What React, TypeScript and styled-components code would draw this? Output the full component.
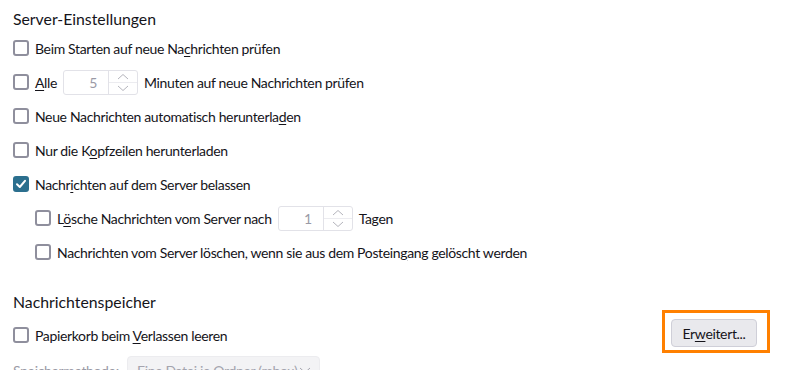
import React from "react";
import styled, { createGlobalStyle } from "styled-components";

const GlobalStyle = createGlobalStyle`
    html, body {
        margin: 0;
        padding: 0;
        background: #ffffff;
    }
    body {
        font-family: Lato, "Noto Sans", sans-serif;
        color: #15141a;
    }
`

const Page = styled.div`
    width: 799px;
    height: 370px;
    overflow: hidden;
    box-sizing: border-box;
    padding: 7px 29px 0 13px;
    display: flex;
    flex-direction: column;
    & > * {
        flex-shrink: 0;
    }
`

const Heading = styled.h2<{ $top?: number }>`
    margin: ${p => p.$top ?? 0}px 0 0 0;
    font-size: 15.8px;
    font-weight: 400;
    line-height: 24px;
    height: 24px;
`

const Row = styled.div<{ $indent?: boolean, $height?: number }>`
    display: flex;
    align-items: center;
    height: ${p => p.$height ?? 34}px;
    padding-left: ${p => p.$indent ? 22 : 0}px;
    font-size: 14px;
    letter-spacing: -0.35px;
    gap: 6px;
    white-space: nowrap;
`

const SpreadRow = styled(Row)`
    justify-content: space-between;
    align-items: flex-start;
`

const LeftGroup = styled.div`
    display: flex;
    align-items: center;
    gap: 6px;
    height: 100%;
`

const Box = styled.span<{ $checked?: boolean }>`
    width: 16px;
    height: 16px;
    box-sizing: border-box;
    border-radius: 3px;
    border: 2px solid ${p => p.$checked ? "#2b6f8e" : "#8f8f9d"};
    background: ${p => p.$checked ? "#2b6f8e" : "#ffffff"};
    display: inline-flex;
    align-items: center;
    justify-content: center;
    flex-shrink: 0;
`

const Key = styled.span`
    text-decoration: underline;
    text-underline-offset: 2px;
`

const Spinner = styled.div`
    display: flex;
    width: 75px;
    height: 25px;
    box-sizing: border-box;
    border: 1px solid #e2e2e8;
    border-radius: 3px;
    background: #ffffff;
`

const SpinValue = styled.span`
    flex: 1;
    text-align: right;
    padding-right: 11px;
    line-height: 23px;
    color: #9a9aa6;
`

const SpinButtons = styled.div`
    width: 28px;
    display: flex;
    flex-direction: column;
    border-left: 1px solid #e2e2e8;
`

const SpinHalf = styled.span<{ $top?: boolean }>`
    flex: 1;
    display: flex;
    align-items: center;
    justify-content: center;
    border-top: ${p => p.$top ? "none" : "1px solid #ececf0"};
`

const DisabledLabel = styled.span`
    width: 108px;
    color: #9a9aa6;
`

const Select = styled.div`
    width: 193px;
    height: 28px;
    box-sizing: border-box;
    border-radius: 4px;
    background: #f3f3f5;
    border: 1px solid #ececef;
    display: flex;
    align-items: center;
    justify-content: space-between;
    padding: 0 8px 0 9px;
    color: #a4a4ae;
`

const Highlight = styled.div`
    border: 3px solid #ff8000;
    padding: 6px 10px 3px 6px;
    margin-top: -4px;
`

const Button = styled.button`
    width: 86px;
    height: 28px;
    box-sizing: border-box;
    border: 1px solid #cfcfd8;
    border-radius: 4px;
    background: #e9e9ed;
    font-family: inherit;
    font-size: 14px;
    letter-spacing: -0.35px;
    color: #15141a;
    padding: 0;
`

const Chevron = (props: { up?: boolean, color?: string }) => (
    <svg width="12" height="7" viewBox="0 0 12 7">
        <path d={props.up ? "M1 6 L6 1.5 L11 6" : "M1 1 L6 5.5 L11 1"} fill="none" stroke={props.color ?? "#b4b4bc"} strokeWidth="1" />
    </svg>
)

const Check = (props: { checked?: boolean }) => (
    <Box $checked={props.checked}>
        {props.checked &&
            <svg width="12" height="12" viewBox="0 0 12 12">
                <path d="M2 6.3 L4.8 9 L10 2.8" fill="none" stroke="#ffffff" strokeWidth="2" strokeLinecap="round" strokeLinejoin="round" />
            </svg>}
    </Box>
)

const NumberSpin = (props: { value: number }) => (
    <Spinner>
        <SpinValue>{props.value}</SpinValue>
        <SpinButtons>
            <SpinHalf $top><Chevron up /></SpinHalf>
            <SpinHalf><Chevron /></SpinHalf>
        </SpinButtons>
    </Spinner>
)

export default function App() {
    return <>
        <GlobalStyle />
        <Page>
            <Heading>Server-Einstellungen</Heading>
            <Row>
                <Check />
                <span>Beim Starten auf neue Na<Key>c</Key>hrichten prüfen</span>
            </Row>
            <Row>
                <Check />
                <span><Key>A</Key>lle</span>
                <NumberSpin value={5} />
                <span>Minuten auf neue Nachrichten prüfen</span>
            </Row>
            <Row>
                <Check />
                <span>Neue Nachrichten automatisch herunterla<Key>d</Key>en</span>
            </Row>
            <Row>
                <Check />
                <span>Nur die K<Key>o</Key>pfzeilen herunterladen</span>
            </Row>
            <Row>
                <Check checked />
                <span>Nachr<Key>i</Key>chten auf dem Server belassen</span>
            </Row>
            <Row $indent>
                <Check />
                <span>L<Key>ö</Key>sche Nachrichten vom Server nach</span>
                <NumberSpin value={1} />
                <span>Tagen</span>
            </Row>
            <Row $indent>
                <Check />
                <span>Nachrichten vom Server löschen, wenn sie aus dem Postein<Key>g</Key>ang gelöscht werden</span>
            </Row>

            <Heading $top={21}>Nachrichtenspeicher</Heading>
            <SpreadRow $height={42}>
                <LeftGroup>
                    <Check />
                    <span>Papierkorb beim <Key>V</Key>erlassen leeren</span>
                </LeftGroup>
                <Highlight>
                    <Button>Er<Key>w</Key>eitert...</Button>
                </Highlight>
            </SpreadRow>
            <Row $height={28}>
                <DisabledLabel>Speichermethode:</DisabledLabel>
                <Select>
                    <span>Eine Datei je Ordner (mbox)</span>
                    <Chevron color="#a4a4ae" />
                </Select>
            </Row>
        </Page>
    </>
}
